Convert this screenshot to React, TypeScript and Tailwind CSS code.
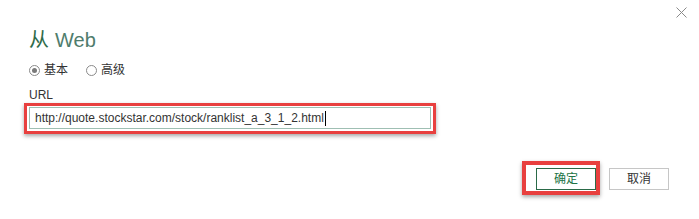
import React from "react";

const font = { fontFamily: '"Liberation Sans", "Noto Sans CJK SC", sans-serif' };

function Radio({ checked }: { checked?: boolean }) {
  return (
    <span className="flex h-[11px] w-[11px] items-center justify-center rounded-full border border-[#8a8a8a] bg-white">
      {checked && <span className="h-[5px] w-[5px] rounded-full bg-[#7a7a7a]" />}
    </span>
  );
}

export default function App() {
  return (
    <div
      className="relative h-[219px] w-[699px] overflow-hidden bg-white text-[#333]"
      style={font}
    >
      {/* close */}
      <button className="absolute right-[12px] top-[7px] h-[11px] w-[11px]">
        <svg viewBox="0 0 11 11" className="h-[11px] w-[11px]">
          <path d="M0.5 0.5 L10.5 10.5 M10.5 0.5 L0.5 10.5" stroke="#8a8a8a" strokeWidth="1" />
        </svg>
      </button>

      <div className="flex flex-col pl-[29px] pr-[30px] pt-[27px]">
        <h1 className="flex items-center gap-[6px] text-[20px] leading-[26px] text-[#4f7c6c]">
          <span className="text-[#2f6b4a]">从</span>
          <span>Web</span>
        </h1>

        <div className="mt-[9px] flex items-center text-[12px] leading-[16px]">
          <label className="flex items-center gap-[4px]">
            <Radio checked />
            <span>基本</span>
          </label>
          <label className="ml-[18px] flex items-center gap-[4px]">
            <Radio />
            <span>高级</span>
          </label>
        </div>

        <div className="mt-[10px] text-[12px] leading-[14px]">URL</div>

        <div className="ml-[-5px] mt-[1px] w-[412px] border-[3px] border-[#e8403f] px-[2px] pb-[2px] pt-[1px] shadow-[0_2px_4px_rgba(0,0,0,0.35)]">
          <div className="flex h-[22px] items-center border border-[#9fbfb3] pl-[5px] text-[12px]">
            <span>http://quote.stockstar.com/stock/ranklist_a_3_1_2.html</span>
            <span className="ml-[1px] h-[15px] w-[1px] bg-black" />
          </div>
        </div>

        <div className="mt-[27px] flex items-start justify-end">
          <div className="border-[4px] border-[#e8403f] pb-[1px] pl-[10px] pt-[3px] shadow-[0_2px_4px_rgba(0,0,0,0.35)]">
            <button className="flex h-[22px] w-[60px] items-center justify-center border border-[#2a6a48] text-[12px] text-[#217346]">
              确定
            </button>
          </div>
          <button className="ml-[9px] mt-[7px] flex h-[22px] w-[60px] items-center justify-center border border-[#c6c6c6] text-[12px] text-[#333]">
            取消
          </button>
        </div>
      </div>
    </div>
  );
}
